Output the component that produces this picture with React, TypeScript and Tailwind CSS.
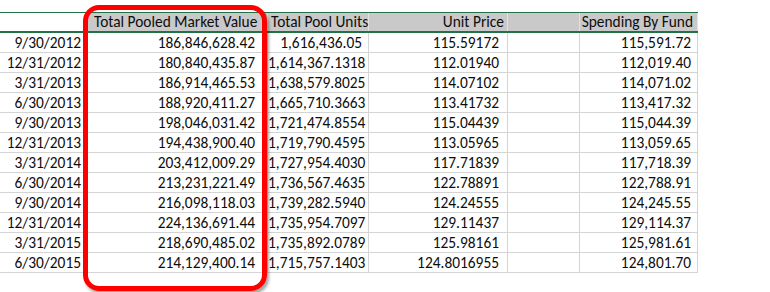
import React from 'react';

interface Row {
  date: string;
  value: string;
  units: string;
  price: string;
  spending: string;
}

const rows: Row[] = [
  { date: '9/30/2012', value: '186,846,628.42', units: '1,616,436.05', price: '115.59172', spending: '115,591.72' },
  { date: '12/31/2012', value: '180,840,435.87', units: '1,614,367.1318', price: '112.01940', spending: '112,019.40' },
  { date: '3/31/2013', value: '186,914,465.53', units: '1,638,579.8025', price: '114.07102', spending: '114,071.02' },
  { date: '6/30/2013', value: '188,920,411.27', units: '1,665,710.3663', price: '113.41732', spending: '113,417.32' },
  { date: '9/30/2013', value: '198,046,031.42', units: '1,721,474.8554', price: '115.04439', spending: '115,044.39' },
  { date: '12/31/2013', value: '194,438,900.40', units: '1,719,790.4595', price: '113.05965', spending: '113,059.65' },
  { date: '3/31/2014', value: '203,412,009.29', units: '1,727,954.4030', price: '117.71839', spending: '117,718.39' },
  { date: '6/30/2014', value: '213,231,221.49', units: '1,736,567.4635', price: '122.78891', spending: '122,788.91' },
  { date: '9/30/2014', value: '216,098,118.03', units: '1,739,282.5940', price: '124.24555', spending: '124,245.55' },
  { date: '12/31/2014', value: '224,136,691.44', units: '1,735,954.7097', price: '129.11437', spending: '129,114.37' },
  { date: '3/31/2015', value: '218,690,485.02', units: '1,735,892.0789', price: '125.98161', spending: '125,981.61' },
  { date: '6/30/2015', value: '214,129,400.14', units: '1,715,757.1403', price: '124.8016955', spending: '124,801.70' },
];

const cols = 'grid grid-cols-[88px_180px_101px_139px_72px_118px]';
const cell = 'h-[19px] border-r border-[#d4d4d4] text-right leading-[19px] pr-[6px] whitespace-nowrap';
const head = 'h-[18px] border-r border-[#e2e2e2] leading-[18px] whitespace-nowrap';

export default function App() {
  return (
    <div className="relative w-[770px] h-[292px] bg-white overflow-hidden text-[#0d0d0d] text-[15.4px] font-['Carlito','Lato','Liberation_Sans',sans-serif]">
      <div className="pt-[12px] w-[698px]">
        <div className={`${cols} border-t border-[#217346] border-b-[2px] border-b-[#217346]`}>
          <div className="h-[18px] border-r border-[#e2e2e2]" />
          <div className={`${head} bg-[#c9c9c9] pl-[6px]`}>Total Pooled Market Value</div>
          <div className={`${head} bg-[#c9c9c9] pl-[3px]`}>Total Pool Units</div>
          <div className={`${head} bg-[#c9c9c9] text-right pr-[3px]`}>Unit Price</div>
          <div className={`${head} bg-[#c9c9c9]`} />
          <div className={`${head} bg-[#c9c9c9] text-right pr-[4px]`}>Spending By Fund</div>
        </div>
        {rows.map((r) => (
          <div key={r.date} className={`${cols} border-b border-[#d4d4d4]`}>
            <div className={`${cell} pr-[5px]`}>{r.date}</div>
            <div className={`${cell} pr-[12px]`}>{r.value}</div>
            <div className={`${cell}`}>{r.units}</div>
            <div className={`${cell} pr-[8px]`}>{r.price}</div>
            <div className={cell} />
            <div className={cell}>{r.spending}</div>
          </div>
        ))}
      </div>
      <div className="absolute left-[83px] top-[5px] w-[184px] h-[286px] rounded-[16px] border-[5px] border-[#ff0000] shadow-[2px_3px_3px_rgba(0,0,0,0.35)]" />
    </div>
  );
}
